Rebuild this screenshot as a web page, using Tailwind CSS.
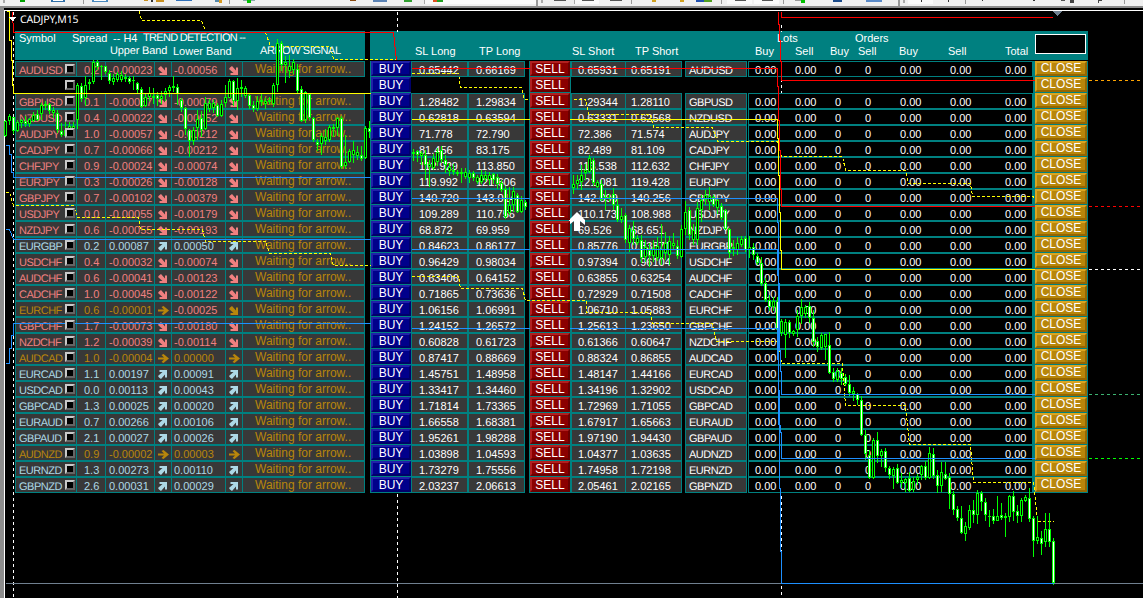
<!DOCTYPE html>
<html lang="en">
<head>
<meta charset="utf-8">
<title>CADJPY,M15</title>
<script src="https://cdn.jsdelivr.net/npm/@tailwindcss/browser@4"></script>
</head>
<body class="bg-black">
<div class="relative w-[1143px] h-[598px] overflow-hidden bg-black text-white font-['Liberation_Sans',Arial,sans-serif] text-[11px] flex flex-col">
  <header class="h-[8px] shrink-0 bg-[#f0f0f0] border-b-2 border-[#8c8c8c]">
    <svg id="toolbar" width="1143" height="6" class="block" shape-rendering="crispEdges"></svg>
  </header>
  <main class="flex-1 flex flex-col border-l-4 border-[#8c8c8c]">
    <div class="h-[23px] pl-[16px] pt-[3px] leading-4 font-['Noto_Sans','Open_Sans',sans-serif] text-[10.5px]"><span class="[text-rendering:geometricPrecision] tracking-[-0.15px]">CADJPY,M15</span></div>
    <div class="flex gap-[5px] pl-[11px]">
      <section class="w-[350px]">
        <div class="h-[29px] bg-[#008080] mb-px">
          <div class="flex h-[13px] leading-[14px] pl-1 whitespace-pre">
            <span class="w-[53px]">Symbol</span><span class="w-[41px]">Spread</span><span class="w-[30px]">-- H4</span><span class="[text-rendering:geometricPrecision] tracking-[-0.7px]">TREND DETECTION --</span>
          </div>
          <div class="flex h-[16px] leading-[14px] pl-[95px] whitespace-pre">
            <span class="w-[63px] [text-rendering:geometricPrecision] tracking-[-0.15px]">Upper Band</span><span class="w-[87px]">Lower Band</span><span class="[text-rendering:geometricPrecision] tracking-[-0.4px]">ARROW SIGNAL</span>
          </div>
        </div>
        <div id="trend"></div>
      </section>
      <section class="w-[718px]">
        <div class="flex justify-between h-[29px] bg-[#008080] mb-px pr-[2px]">
          <div>
            <div class="flex h-[13px] leading-[14px] pl-[407px]"><span class="w-[78px]">Lots</span><span>Orders</span></div>
            <div class="flex h-[16px] leading-[14px] pl-[45px] whitespace-pre">
              <span class="w-[64px]">SL Long</span><span class="w-[93px]">TP Long</span><span class="w-[63px]">SL Short</span><span class="w-[120px]">TP Short</span><span class="w-[40px]">Buy</span><span class="w-[35px]">Sell</span><span class="w-[28px]">Buy</span><span class="w-[41px]">Sell</span><span class="w-[49px]">Buy</span><span class="w-[57px]">Sell</span><span>Total</span>
            </div>
          </div>
          <div class="mt-[3px] w-[51px] h-[20px] bg-black border border-white"></div>
        </div>
        <div id="trade"></div>
      </section>
    </div>
  </main>
  <svg id="chart" class="absolute inset-0 z-10" width="1143" height="598" fill="none" shape-rendering="crispEdges"></svg>
</div>
<script>
const P='text-[#f08080]',B='text-[#add8e6]',G='text-[#b8860b]';
// symbol, spread, upper, lower, SL long, TP long, SL short, TP short
const raw=`AUDUSD 0.2 -0.00023 -0.00056 0.65442 0.66169 0.65931 0.65191
-
GBPUSD 0.1 -0.00087 -0.00079 1.28482 1.29834 1.29344 1.28110
NZDUSD 0.4 -0.00022 -0.00052 0.62818 0.63594 0.63331 0.62568
AUDJPY 1.0 -0.00057 -0.00212 71.778 72.790 72.386 71.574
CADJPY 0.7 -0.00066 -0.00212 81.456 83.175 82.489 81.109
CHFJPY 0.9 -0.00024 -0.00074 112.929 113.850 113.538 112.632
EURJPY 0.3 -0.00026 -0.00128 119.992 121.606 121.081 119.428
GBPJPY 0.7 -0.00102 -0.00379 140.720 143.014 142.099 140.256
USDJPY 0.0 -0.00055 -0.00179 109.289 110.756 110.173 108.988
NZDJPY 0.6 -0.00055 -0.00193 68.872 69.959 69.526 68.651
EURGBP 0.2 0.00087 0.00050 0.84623 0.86177 0.85776 0.83871
USDCHF 0.4 -0.00032 -0.00074 0.96429 0.98034 0.97394 0.96104
AUDCHF 0.6 -0.00041 -0.00123 0.63406 0.64152 0.63855 0.63254
CADCHF 1.0 -0.00045 -0.00122 0.71865 0.73636 0.72929 0.71508
EURCHF 0.6 -0.00001 -0.00025 1.06156 1.06991 1.06710 1.05883
GBPCHF 1.7 -0.00073 -0.00180 1.24152 1.26572 1.25613 1.23650
NZDCHF 1.2 -0.00039 -0.00114 0.60828 0.61723 0.61366 0.60647
AUDCAD 1.0 -0.00004 0.00000 0.87417 0.88669 0.88324 0.86855
EURCAD 1.1 0.00197 0.00091 1.45751 1.48958 1.48147 1.44166
USDCAD 0.0 0.00113 0.00043 1.33417 1.34460 1.34196 1.32902
GBPCAD 1.3 0.00025 0.00020 1.71814 1.73365 1.72969 1.71055
EURAUD 0.7 0.00266 0.00106 1.66558 1.68381 1.67917 1.65663
GBPAUD 2.1 0.00027 0.00026 1.95261 1.98288 1.97190 1.94430
AUDNZD 0.9 -0.00002 0.00003 1.03898 1.04593 1.04377 1.03635
EURNZD 1.3 0.00273 0.00110 1.73279 1.75556 1.74958 1.72198
GBPNZD 2.6 0.00031 0.00029 2.03237 2.06613 2.05461 2.02165`.split('\n').map(l=>l.split(' '));
const flat=['EURCHF','AUDCAD','AUDNZD'];
const sym=s=>`<span class="[text-rendering:geometricPrecision] tracking-[-0.5px]">${s}</span>`;
const arrow=(c,dir)=>{
  const d={dn:'M1 1.5L3 0L7 4.5V1.5H9V9H1.5V7H4.5L0 3Z',up:'M1 7.5L3 9L7 4.5V7.5H9V0H1.5V2H4.5L0 6Z',rt:'M0 3.5H6L3.5 1L5.5 0L11 4.5L5.5 9L3.5 8L6 5.5H0Z'}[dir];
  return `<svg class="${c} mt-[4px] ml-[3px] shrink-0 overflow-visible" width="9" height="9"><path fill="currentColor" d="${d}"/></svg>`};
const check=`<span class="relative z-20 mt-[3px] mr-px size-[10px] shrink-0 bg-black border-2 border-t-[#c8c8c8] border-l-[#c8c8c8] border-r-[#646464] border-b-[#646464]"></span>`;
document.getElementById('trend').innerHTML=raw.map(r=>{
  if(r.length<2) return `<div class="flex h-[16px] pl-px"><div class="w-[60px] flex justify-end">${check}</div></div>`;
  const f=flat.includes(r[0]),up=r[3][0]!='-'&&!f,c=f?G:up?B:P;
  const lc=r[0]=='EURCHF'?P:c,a1=f?'rt':up?'up':'dn',a2=r[0]=='EURCHF'?'dn':a1;
  const k='border-r border-[#008080] flex overflow-visible';
  return `<div class="flex h-[16px] border border-[#008080] bg-[#383838] leading-[16px] whitespace-nowrap ${c}">
  <div class="${k} w-[61px] pl-[3px] justify-between"><span class="w-[45px]">${sym(r[0])}</span><span class="-mt-px flex">${check}</span></div>
  <div class="${k} w-[29px] pl-[7px]">${r[1]}</div>
  <div class="${k} w-[49px] pl-[3px]">${r[2]}</div>
  <div class="${k} w-[17px]">${arrow(c,a1)}</div>
  <div class="${k} w-[54px] pl-[2px] ${lc}">${r[3]}</div>
  <div class="${k} w-[17px]">${arrow(c,a2)}</div>
  <div class="pl-[12px] text-[12px] leading-[14px] text-[#b8860b]">Waiting for arrow..</div></div>`}).join('');
document.getElementById('trade').innerHTML=raw.map(r=>{
  const e=r.length<2;
  const k='h-[16px] border border-[#008080] bg-[#383838] leading-[16px]';
  const v=(w,p,i)=>e?`<div class="${w}"></div>`:`<div class="${k} ${w} ${p}">${r[i]}</div>`;
  const bt='relative z-20 h-[15px] border-2 text-[12px] flex justify-center';
  return `<div class="flex h-[16px] whitespace-nowrap">
  <div class="w-[41px] bg-[#008080] pl-px"><div class="${bt} leading-[13px] bg-[#00008b] border-t-[#2020a8] border-l-[#2020a8] border-r-[#00006a] border-b-[#00006a]">BUY</div></div>
  ${v('w-[57px]','pl-[7px]',4)}${v('w-[57px]','pl-[7px]',5)}<div class="w-[4px]"></div>
  <div class="w-[42px] bg-[#008080] pl-px pr-px"><div class="${bt} leading-[13px] bg-[#8b0000] border-t-[#b02020] border-l-[#b02020] border-r-[#6a0000] border-b-[#6a0000]">SELL</div></div>
  ${v('w-[55px]','pl-[6px]',6)}${v('w-[56px] border-l-0','pl-[5px]',7)}<div class="w-[3px]"></div>
  ${e?'<div class="w-[62px]"></div>':`<div class="${k} w-[62px] pl-[3px]">${sym(r[0])}</div>`}<div class="w-px"></div>
  ${e?'<div class="w-[285px]"></div>':`<div class="h-[16px] w-[285px] border border-[#008080] leading-[16px] pl-[6px] flex"><span class="w-[40px]">0.00</span><span class="w-[40px]">0.00</span><span class="w-[30px]">0</span><span class="w-[35px]">0</span><span class="w-[50px]">0.00</span><span class="w-[55px]">0.00</span>0.00</div>`}
  <div class="w-[55px] bg-[#008080] pl-[2px] pr-px"><div class="${bt} leading-[10px] bg-[#b8860b] border-t-[#daa520] border-l-[#daa520] border-r-[#966600] border-b-[#966600]">CLOSE</div></div></div>`}).join('');
// candles: first x, then high,bodyTop,bodyBottom,low,falling at 4px steps
const runs=[[5,`120,121,136,137,0 114,116,121,125,0 117,117,131,134,1 120,122,131,132,0 119,120,123,128,0 116,121,124,127,1 118,119,124,127,0 112,115,121,122,0 110,114,120,121,1 103,105,114,120,0 101,104,106,110,0 103,104,111,114,1 107,110,113,118,0 110,113,130,133,1 123,131,135,137,1 122,130,136,138,0 120,126,130,138,0 122,126,130,136,0 83,85,120,129,0 83,86,99,102,1 76,85,98,106,0 79,82,84,90,0 60,62,82,84,0 60,62,67,70,1 65,66,67,80,0 66,66,72,74,1 70,73,81,84,1 74,78,82,85,0 72,74,80,82,0 71,75,80,82,0 74,77,79,82,0 76,78,82,84,1 76,80,81,90,0 82,83,90,94,1 87,89,107,108,1 94,97,106,107,0 87,93,97,101,0 88,96,98,104,0 92,95,99,106,1 91,96,99,104,0 88,91,95,101,0 85,87,91,97,0 76,86,88,92,0 84,87,94,105,1 98,100,108,112,1 107,108,129,135,1 129,130,141,157,1 127,130,141,145,0 110,119,128,140,0 111,118,130,137,1 97,103,129,130,0 99,103,109,112,0 100,103,108,113,0 103,105,116,117,1 100,104,116,117,0 85,97,103,107,0 79,81,98,98,0 80,81,101,106,1 78,88,101,110,0 80,87,89,97,0 86,88,96,98,0 93,95,106,109,1 101,105,109,112,1 96,101,109,111,0 94,100,102,106,0 98,101,104,109,0 97,100,102,104,0 83,85,104,107,0 39,43,85,92,0 41,43,65,71,1 56,62,65,83,0 55,66,71,78,0 59,62,70,74,0 64,69,91,94,1 86,89,121,122,1 91,92,120,123,0 93,94,118,120,1 117,118,140,142,1 139,142,145,151,1 133,136,144,155,0 129,137,141,145,0 125,127,140,142,0 124,127,129,137,0 117,118,128,136,0 116,118,167,169,1 135,162,166,169,0 149,151,162,163,0 141,150,155,163,0 146,152,156,160,0 146,155,159,161,1 126,128,158,159,0 121,128,132,138,1`],
[413,`149,152,154,161,0 150,151,155,162,1 151,153,156,165,0 150,155,165,180,1 160,164,167,187,0 154,158,168,170,0 148,152,162,166,0 146,150,160,163,1 155,160,165,173,1 163,167,171,176,0 164,170,172,175,0 170,172,174,176,0 168,172,174,183,0 168,172,177,179,0 170,173,178,183,0 171,173,178,181,1 175,177,182,184,0 170,175,182,184,0 171,175,179,182,0 172,175,180,185,0 173,174,180,184,1 174,177,184,189,1 180,183,190,192,1 186,189,217,219,1 187,205,213,215,0 187,191,205,212,0 193,195,212,213,1 196,200,212,213,0 200,202,207,210,1`],
[573,`175,184,188,194,0 175,180,184,189,0 165,175,182,190,0 164,170,173,180,0 155,158,172,173,0 158,160,183,186,1 180,182,187,188,0 180,184,200,201,1 190,197,199,210,0 194,197,199,202,0 188,194,205,210,1 198,205,220,222,1 208,216,220,223,0 213,215,240,243,1 225,228,243,252,0 221,230,239,245,1 235,238,243,245,0 235,240,258,263,1 240,247,257,262,0 243,250,256,267,1 240,248,256,262,0 237,246,258,261,0 224,249,258,265,0 232,243,253,260,0 236,241,255,265,0 233,243,246,249,0 240,246,256,259,1 225,229,257,258,0 201,212,229,235,0 207,210,235,240,1 224,230,240,245,0 202,208,240,245,0 195,200,210,222,0 190,195,200,205,0 187,196,202,210,0 195,197,205,207,1 198,200,208,214,0 203,206,218,220,1 209,210,229,230,1 228,229,253,258,1 240,247,249,256,0 237,243,250,255,0 236,239,245,247,0 236,238,250,252,1 236,247,250,258,0 243,247,255,260,1 253,256,263,265,1 257,263,284,286,1 278,283,300,302,1 295,300,307,311,1 297,301,307,311,0 297,301,330,332,1 319,321,333,336,0 319,322,335,358,0 320,322,333,338,1 330,331,334,336,0 310,316,330,337,0 299,307,316,324,0 305,307,314,318,0 302,306,318,323,1 310,318,342,347,1 337,341,347,352,1 333,335,348,350,0 334,334,347,360,0 332,345,373,374,1 368,372,379,382,1 368,371,380,382,0 368,373,379,385,1 374,377,384,386,1 375,384,393,396,1 387,391,394,401,0 393,394,400,405,1 396,400,435,436,1 430,435,454,460,1 450,455,478,479,1 438,440,478,479,0 432,440,456,463,1 449,451,456,467,0 448,451,468,472,1 466,468,475,479,1 467,469,476,489,0 464,468,483,484,1 473,480,483,488,0 478,479,483,492,0 472,478,491,492,1 477,481,490,492,0 474,477,480,485,0 465,466,475,480,0 461,466,478,480,1 447,453,478,479,0 448,454,476,479,1 470,475,486,493,1 462,472,486,492,0 462,474,479,480,1 473,477,494,509,1 491,494,510,515,1 506,509,518,521,1 506,518,533,534,1 522,526,534,541,0 505,510,528,530,0 500,510,515,523,1 490,493,515,524,0 491,493,502,511,1 498,502,515,521,1 510,516,517,527,0 509,516,521,524,1 496,516,521,521,0 503,515,518,520,1 513,516,518,537,0 495,496,517,522,0 491,496,512,521,1 505,511,516,523,1 498,500,516,522,0 495,497,501,502,0 488,498,519,522,1 516,518,541,557,1 516,537,541,544,0 531,538,544,555,1 513,529,542,547,0 513,529,542,547,1 538,541,583,585,1`]];
let s='';
const ln=(c,d,x='')=>s+=`<path transform="translate(.5 .5)" stroke="${c}" d="${d}" ${x}/>`;
const da='stroke-dasharray="3 2"',BL='#1e90ff',Y='#ffff00',R='#ff0000';
ln('#fff','M4 598V10H1143');
['M13 11V598','M397 11V31','M397 493V598','M781 24V31','M781 78V92','M781 495V598'].forEach(d=>ln('#fff',d,'stroke-dasharray="3 3"'));
ln('#708090','M5 583H1143');
[[80,'#ffa500'],[206,R],[269,'#fff'],[394,'#3cb371'],[458,'#00ff00']].forEach(([y,c])=>ln(c,`M1088 ${y}H1143`,'stroke-dasharray="3 3"'));
['M139 11L141 20H201L205 30','M265 32L270 46H330L333 59H396','M411 73H458L460 87H521L524 99H529','M573 99H585L588 114H650L653 127H712L717 141H777L781 156H842L845 170H905L908 183H970L972 196H1033L1036 203',
'M5 192H9L13 205H73L77 217H138L140 229H202L205 241H265L269 253H330L333 265H371','M411 276H458L460 288H522L525 300H586V312H650L652 323H712L716 341H778L781 363H842L845 405H905L909 444H970L973 482H1033L1037 521H1053'].forEach(d=>ln(Y,d,da));
for(const [x0,str] of runs) str.split(' ').forEach((q,i)=>{const [h,a,b,l,f]=q.split(',').map(Number),x=x0+i*4;
  s+=`<rect x="${x}" y="${h}" width="1" height="${l-h}" fill="#0f0"/><rect x="${x-1}" y="${a}" width="3" height="${Math.max(1,b-a)}" fill="#0f0"/>`;
  if(b-a>2) s+=`<rect x="${x}" y="${a+1}" width="1" height="${b-a-2}" fill="${f?'#fff':'#000'}"/>`});
['M12 11V22M13 22V32H393L396 60','M411 68H777V86H778V120H779V150H780V189H781V206H1035','M778 11V24H779V40H780V61H781V80H1035','M781 11V17H1052'].forEach(d=>ln(R,d));
['M6 11H9V40H11V60H12V85H13V93H371','M411 119H777V138H778V175H779V212H780V250H781V269H1035'].forEach(d=>ln(Y,d));
['M5 145H9V154H11V172H13V177H371','M5 229H9L13 239H371','M5 363H9V348H11V335H13V323H371','M411 198H777V222H778V283H779V350H780V371H781V394H1035','M411 249H777V275H778V390H779V425H780V432H781V458H1035','M411 328H777V359H778V424H779V488H780V551H781V583H1053'].forEach(d=>ln(BL,d));
s+=`<path d="M8 17H16L12 21Z" fill="#fff"/><path d="M1052 11H1062L1057 16Z" fill="#708090"/>
<path shape-rendering="auto" d="M577 212L585 220V225L580 221V231H574V221L569 225V220Z" fill="#fff"/>`;
document.getElementById('chart').innerHTML=s;
// lower edges of the toolbar glyphs: x, y, width, height, colour
document.getElementById('toolbar').innerHTML=[[3,0,2,3,'#aaa'],[20,0,5,2,'#00a000'],[51,0,14,2,'#2f6fa8'],[53,0,10,1,'#fff'],[83,0,1,4,'#999'],[92,0,16,2,'#4a8ac0'],[94,0,12,1,'#fff'],[144,0,4,1,'#c89020'],[151,0,2,2,'#333'],[156,0,8,2,'#c89020'],[176,0,16,1,'#2f6fb8'],[215,0,5,2,'#5588aa'],[219,0,3,3,'#d89a20'],[229,0,1,4,'#999'],[243,0,12,1,'#8aa'],[247,0,4,3,'#00c000'],[350,0,6,1,'#8a4a10'],[373,0,14,2,'#5a82b4'],[404,0,8,2,'#30a030'],[424,0,112,4,'#fafafa'],[424,0,1,4,'#aaa'],[433,0,5,2,'#e05020'],[437,0,6,2,'#20a020'],[536,0,2,6,'#999'],[541,0,2,3,'#aaa'],[554,0,12,1,'#555'],[574,0,25,4,'#fafafa'],[574,0,1,4,'#aaa'],[582,0,12,1,'#555'],[610,0,12,1,'#555'],[631,0,1,4,'#999'],[652,0,4,2,'#d0a020'],[680,0,4,2,'#d0a020'],[696,0,8,2,'#2050b0'],[704,0,8,2,'#50a020'],[721,0,1,4,'#999'],[727,0,25,4,'#fafafa'],[735,0,11,1,'#555'],[754,0,25,4,'#fafafa'],[762,0,11,1,'#555'],[783,0,1,4,'#999'],[795,0,8,1,'#999'],[801,0,4,3,'#00c000'],[833,0,9,2,'#1a4a8a'],[866,0,16,2,'#5a8ac8'],[898,0,2,6,'#999'],[903,0,2,3,'#aaa'],[908,0,25,4,'#fafafa'],[921,0,1,2,'#333'],[948,0,1,2,'#333'],[965,0,1,4,'#999'],[982,0,1,1,'#333'],[1033,0,2,1,'#333'],[1061,0,4,1,'#555'],[1070,0,4,3,'#444'],[1098,0,4,1,'#444'],[1098,0,1,3,'#444'],[1124,0,1,4,'#999']].map(a=>`<rect x="${a[0]}" y="${a[1]}" width="${a[2]}" height="${a[3]}" fill="${a[4]}"/>`).join('');
</script>
</body>
</html>
